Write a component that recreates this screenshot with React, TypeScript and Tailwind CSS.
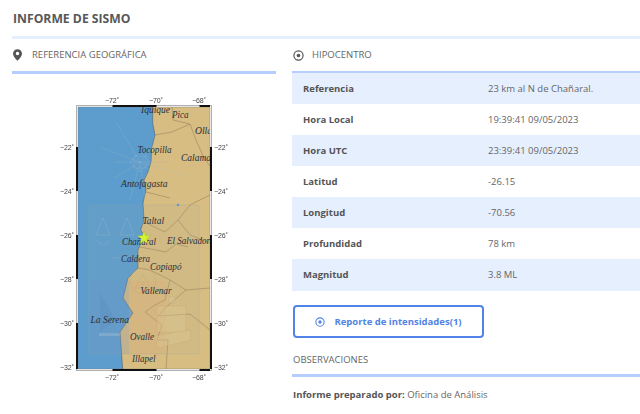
import React from "react";

const rows: [string, string][] = [
  ["Referencia", "23 km al N de Chañaral."],
  ["Hora Local", "19:39:41 09/05/2023"],
  ["Hora UTC", "23:39:41 09/05/2023"],
  ["Latitud", "-26.15"],
  ["Longitud", "-70.56"],
  ["Profundidad", "78 km"],
  ["Magnitud", "3.8 ML"],
];

function Target({ className }: { className: string }) {
  return (
    <svg viewBox="0 0 12 12" className={className} fill="none">
      <circle cx="6" cy="6" r="5" stroke="currentColor" strokeWidth="1.3" />
      <circle cx="6" cy="6" r="2" fill="currentColor" />
    </svg>
  );
}

function Pin() {
  return (
    <svg viewBox="0 0 10 13" className="w-[9px] h-[12px] text-[#555]" fill="currentColor">
      <path fillRule="evenodd" d="M5 0C2.2 0 0 2.2 0 4.8 0 8 3.6 11.600 5 13c1.400-1.400 5-5 5-8.200C10 2.200 7.800 0 5 0Zm0 3a1.900 1.900 0 1 1 0 3.800A1.900 1.900 0 0 1 5 3Z" />
    </svg>
  );
}

const labels: [string, number, number, number][] = [
  ["Iquique", 141, 113, 29],
  ["Pica", 172, 118, 16.500],
  ["Ollagüe", 195, 134, 31],
  ["Tocopilla", 137.500, 153, 34],
  ["Calama", 181, 161, 30],
  ["Antofagasta", 121, 187, 46.500],
  ["Taltal", 142.500, 224, 21.500],
  ["Chañaral", 122, 245, 34],
  ["El Salvador", 167, 244, 43],
  ["Caldera", 121, 262, 29],
  ["Copiapó", 150, 270, 31.500],
  ["Vallenar", 140.500, 294, 31],
  ["La Serena", 90.500, 323, 38.500],
  ["Ovalle", 130, 340, 24],
  ["Illapel", 132, 362, 23.500],
];

const coast =
  "L152.700 123 L155 135 L151.700 148 L151 162 L148 172 L144 180 L146 190 L143 203 L144 220 L140.700 230 L144 235 L138 250 L138 268 L128 278 L123 298 L133 313 L120 332 L122.700 369";

function MapFigure() {
  return (
    <svg viewBox="60 92 170 296" className="w-[170px] h-[296px] block blur-[0.3px]" fontFamily="'Liberation Serif', serif">
      <defs>
        <clipPath id="plot">
          <rect x="78" y="107" width="132" height="262" />
        </clipPath>
      </defs>
      <rect x="76" y="105" width="136" height="266" fill="#fff" />
      <g clipPath="url(#plot)">
        <rect x="78" y="107" width="132" height="262" fill="#d7bd82" />
        <path d={`M78 107 L152.700 107 ${coast} L78 369 Z`} fill="#5c9dcd" />
        <path d={`M152.700 107 ${coast}`} fill="none" stroke="#46555c" strokeWidth="0.5" />

        {/* provincial borders */}
        <g fill="none" stroke="#99845c" strokeWidth="0.6">
          <path d="M172 107 L173 120 L190 124 L196 140 L204 158 L210 166" />
          <path d="M155 135 L172 132 L190 124" />
          <path d="M146 192 L170 198 M210 195 L190 205 L178 220 L190 235 L210 243" />
          <path d="M144 222 L165 232 L178 220" />
          <path d="M140 247 L166 252 L176 244 L188 247" />
          <path d="M138 268 L150 270 L170 280 L186 290 L210 288" />
          <path d="M170 280 L165 300 L155 305 L145 312 L162 325 L157 340 L168 340 L166 369" />
          <path d="M186 290 L165 308 L158 316 L190 314 L210 330" />
        </g>

        {/* watermark: compass rose */}
        <g fill="none" stroke="#a8bcc4" strokeOpacity="0.3" strokeWidth="0.8">
          <path d="M140 162 L116.700 123 M140 162 L101.700 148 M140 162 L115 178 M140 162 L170 125 M140 162 L188 177 M140 162 L155 175 M140 162 L130 200 M140 162 L145 200 M140 162 L115 162 M140 162 L170 162" />
          <path d="M134 156 H146 V168 H134 Z M140 152 L150 162 L140 172 L130 162 Z" />
        </g>

        {/* watermark: shield */}
        <rect x="88" y="205" width="111" height="149" rx="2" fill="#a8a8a0" fillOpacity="0.1" stroke="#9aa0a0" strokeOpacity="0.25" />
        <rect x="129" y="281" width="37" height="73" fill="#e2a070" fillOpacity="0.18" />
        <rect x="89" y="281" width="40" height="73" fill="#6f8fca" fillOpacity="0.18" />
        <g fill="none" stroke="#a9c0cc" strokeOpacity="0.25" strokeWidth="1">
          <path d="M96 235 L103 218 L110 235 Z M120 235 L127 218 L134 235 Z" />
          <path d="M97 240 Q103 250 110 240" />
          <path d="M112 258 L126 258" />
        </g>
        <g fill="#dcc898" fillOpacity="0.35" stroke="#c4a66e" strokeOpacity="0.4" strokeWidth="0.7">
          <path d="M157 306 H186 V332 H157 Z" />
          <path d="M155 336 L190 330 L191 340 L158 348 Z" />
          <circle cx="172" cy="300" r="3.500" />
        </g>
        <g fill="none" stroke="#c4a66e" strokeOpacity="0.5" strokeWidth="0.8">
          <circle cx="143" cy="281" r="13" />
          <path d="M135 288 L143 274 L151 288 Z" />
          <circle cx="143" cy="283" r="1.500" />
        </g>
        <path d="M100 293 L116 320 L100 332 Z" fill="#4f7fb8" fillOpacity="0.2" />
        <path d="M99 333 H120 V336 H99 Z" fill="#a9c3d5" fillOpacity="0.35" />
        <circle cx="178" cy="205" r="1.300" fill="#5c9dcd" />

        {labels.map(([t, x, y, w]) => (
          <text key={t} x={x} y={y} fontSize={10} fontStyle="italic" fill="#2b2f38" textLength={w} lengthAdjust="spacingAndGlyphs">
            {t}
          </text>
        ))}
      </g>

      <polygon
        points="144,231 145.650,235.730 150.660,235.840 146.660,238.870 148.110,243.660 144,240.800 139.890,243.660 141.340,238.870 137.340,235.840 142.350,235.730"
        fill="#d2f52e"
        stroke="#8cab2a"
        strokeWidth="0.3"
      />

      {/* frame */}
      <rect x="76.500" y="105.500" width="135" height="265" fill="none" stroke="#b0b0b0" />
      <rect x="78" y="107" width="132" height="262" fill="none" stroke="#777" strokeWidth="0.4" />
      <rect x="112.500" y="105" width="44" height="2" fill="#111" />
      <rect x="199.500" y="105" width="10.500" height="2" fill="#111" />
      <rect x="112.500" y="369" width="44" height="2" fill="#111" />
      <rect x="199.500" y="369" width="10.500" height="2" fill="#111" />
      {[147, 235, 323].map((y) => (
        <g key={y}>
          <rect x="76" y={y} width="2" height={y === 323 ? 46 : 44} fill="#111" />
          <rect x="210" y={y} width="2" height={y === 323 ? 46 : 44} fill="#111" />
        </g>
      ))}

      <g fontFamily="'Liberation Sans', sans-serif" fontSize="7" fill="#444" textAnchor="middle">
        {[112, 156, 199].map((x, i) => (
          <g key={x}>
            <text x={x} y={103}>{["−72˚", "−70˚", "−68˚"][i]}</text>
            <text x={x} y={380}>{["−72˚", "−70˚", "−68˚"][i]}</text>
          </g>
        ))}
        {[["−22˚", 150], ["−24˚", 194], ["−26˚", 238], ["−28˚", 282], ["−30˚", 326], ["−32˚", 370]].map(([t, y]) => (
          <g key={t as string}>
            <text x={67} y={y as number}>{t}</text>
            <text x={221} y={y as number}>{t}</text>
          </g>
        ))}
      </g>
    </svg>
  );
}

export default function App() {
  return (
    <div className="w-[640px] h-[414px] overflow-hidden bg-white pl-[12px] font-['Open_Sans',sans-serif] text-[#555]">
      <h1 className="h-[36px] pt-[10px] pl-px text-[12.2px] leading-[17px] font-bold text-[#585858]">INFORME DE SISMO</h1>
      <div className="h-[3px] bg-[#e6effe]" />
      <div className="flex gap-[16px]">
        <section className="w-[264px] shrink-0">
          <div className="h-[32px] flex items-center gap-[10px] pl-px">
            <Pin />
            <span className="text-[9.5px] text-[#666] pt-px">REFERENCIA GEOGRÁFICA</span>
          </div>
          <div className="h-[3px] bg-[#b6ceff]" />
          <div className="pl-[48px] pt-[18px]">
            <MapFigure />
          </div>
        </section>
        <section className="flex-1 min-w-0">
          <div className="h-[32px] flex items-center gap-[8px] pl-px">
            <Target className="w-[11px] h-[11px] text-[#555]" />
            <span className="text-[9.5px] text-[#666] pt-px">HIPOCENTRO</span>
          </div>
          <div className="h-[3px] bg-[#b6ceff]" />
          <div className="-mt-px">
            {rows.map(([k, v], i) => (
              <div key={k} className={`h-[31px] flex items-center pt-px text-[9.5px] ${i % 2 === 0 ? "bg-[#e6effe]" : "bg-white"}`}>
                <span className="w-[196px] pl-[11px] font-bold text-[#555]">{k}</span>
                <span className="text-[#666]">{v}</span>
              </div>
            ))}
          </div>
          <div className="h-[1px] bg-[#e6effe]" />
          <button className="mt-[14px] ml-px w-[191px] h-[33px] flex items-center justify-center gap-[9px] border-2 border-[#5283e6] rounded-[4px] text-[#5283e6] text-[9.5px] font-bold">
            <Target className="w-[10px] h-[10px]" />
            <span className="pt-px">Reporte de intensidades(1)</span>
          </button>
          <div className="mt-[15px] h-[21px] pl-px text-[9.5px] leading-[14px] text-[#666]">OBSERVACIONES</div>
          <div className="h-[3px] bg-[#b6ceff]" />
          <p className="mt-[11px] pl-px text-[9.5px] leading-[14px] text-[#666]"><b className="font-bold text-[#555]">Informe preparado por:</b> Oficina de Análisis</p>
        </section>
      </div>
    </div>
  );
}
